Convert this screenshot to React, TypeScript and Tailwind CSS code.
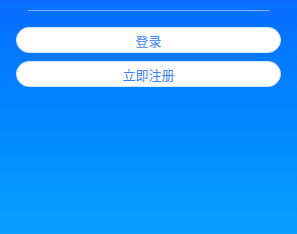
import React from 'react';

export default function App() {
  return (
    <div className="w-[297px] h-[234px] bg-gradient-to-b from-[#0a6cff] to-[#0c9fff] px-4 pt-[10px]" style={{ fontFamily: '"Noto Sans CJK SC", "Noto Sans", sans-serif' }}>
      <div className="mx-3 h-px bg-white/50" />
      <div className="mt-[16px] flex flex-col gap-2">
        <button className="h-[26px] w-full rounded-full bg-white border border-[#d6e4f5] text-[13px] leading-none text-[#3d7ffa]">
          登录
        </button>
        <button className="h-[26px] w-full rounded-full bg-white border border-[#d6e4f5] text-[13px] leading-none text-[#3d7ffa]">
          立即注册
        </button>
      </div>
    </div>
  );
}
